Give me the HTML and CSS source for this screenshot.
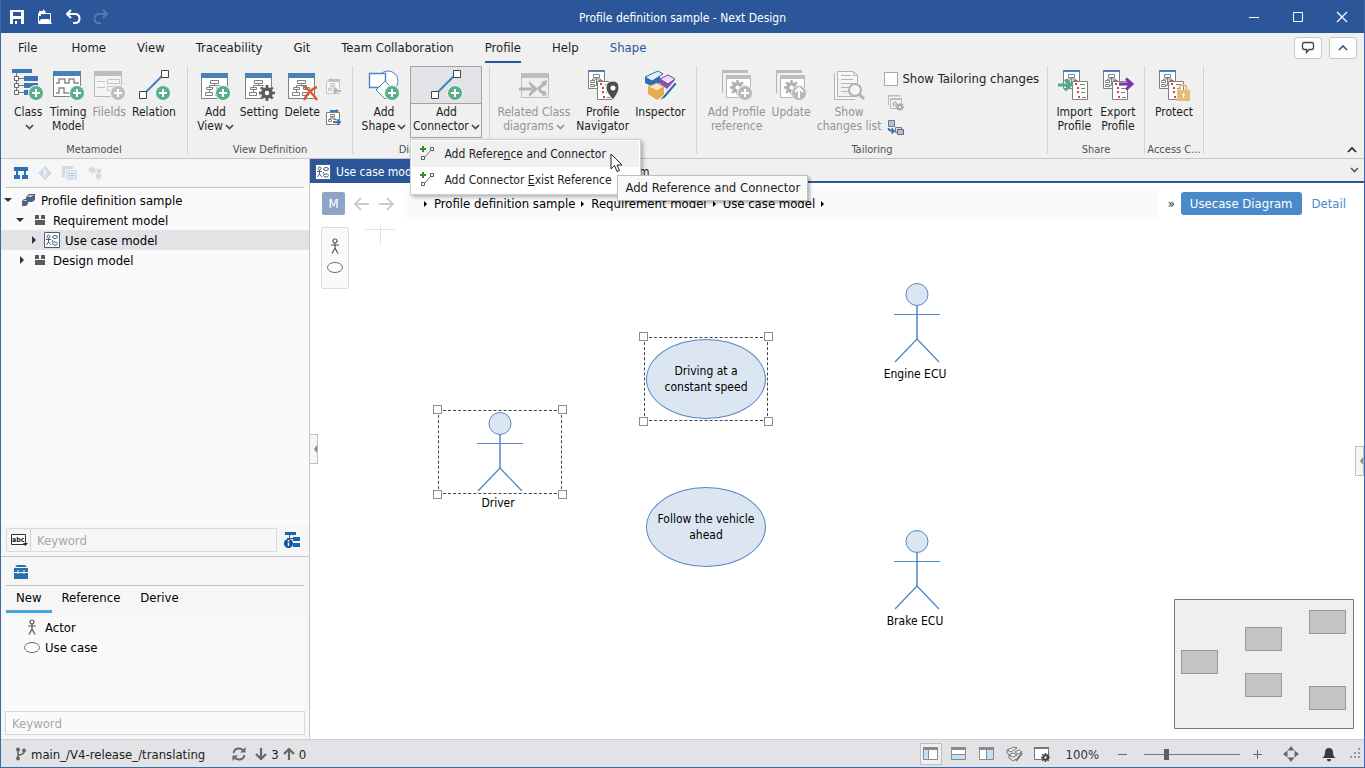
FILE: index.html
```html
<!DOCTYPE html>
<html lang="en">
<head>
    <meta charset="UTF-8">
    <meta name="viewport" content="width=device-width, initial-scale=1.0">
    <title>Profile definition sample - Next Design</title>
    <link rel="stylesheet" href="styles.css">
</head>
<body>
    <!-- shared icon parts -->
    <svg class="defs" width="0" height="0">
        <symbol id="plus" viewBox="0 0 16 16">
            <circle cx="8" cy="8" r="8" fill="#f0f0f0"/>
            <circle cx="8" cy="8" r="7" fill="currentColor"/>
            <path d="M8 4v8M4 8h8" stroke="#fff" stroke-width="2"/>
        </symbol>
        <symbol id="view" viewBox="0 0 28 26">
            <path d="M.5 3v22.500h26V3" fill="#fff" stroke="#808080"/>
            <path d="M0 0h27v5H0z" fill="#4a7fb8"/>
            <path d="M9.500 7.500h8v3h-8zM5.500 14.500h6v2h-6zM4.500 19.500h7v3h-7zM15.500 14.500h6v2h-6zM14.500 19.500h6v3h-6zM13.500 10.500v2M8.500 14.500v-2h10v2M8.500 16.500v3" fill="none" stroke="#808080"/>
        </symbol>
        <symbol id="gear" viewBox="0 0 16 16">
            <path d="M8 0v16M0 8h16M2.300 2.300l11.400 11.400M13.700 2.300L2.300 13.700" stroke="currentColor" stroke-width="2.600"/>
            <circle cx="8" cy="8" r="4" fill="#fff" stroke="currentColor" stroke-width="3.600"/>
        </symbol>
        <symbol id="profile" viewBox="0 0 32 32">
            <path d="M.5 1.500h16v17H.5z" fill="#fff" stroke="#808080"/>
            <path d="M0 0h17v2H0z" fill="#4a7fb8"/>
            <path d="M5.500 4.500h6v3h-6zM2.500 10.500h4v2h-4zM10.500 10.500h4v2h-4zM2.500 14.500h4v2h-4zM8.500 7.500v8h-2M4.500 10.500v-1.500h8v1.500" fill="none" stroke="#808080"/>
            <path d="M9.500 11.500h15v18h-15z" fill="#fff" stroke="#808080"/>
            <path d="M12 13h2v2h-2zM14 17h2v2h-2zM14 21h2v2h-2zM15 26h2v2h-2z" fill="#d0452b"/>
            <path d="M17 14.500h5M18 18.500h4M18 22.500h4M19 27.500h4" stroke="#808080"/>
        </symbol>
        <symbol id="chev" viewBox="0 0 9 6"><path d="M1 1l3.500 3.500L8 1" fill="none" stroke="currentColor" stroke-width="1.600"/></symbol>
        <symbol id="relview" viewBox="0 0 17 17">
            <path d="M1.500 3.500h13v12h-13z" fill="#fff" stroke="#808080"/>
            <path d="M5.500 5.500h4v2h-4zM3.500 10.500h3v2h-3zM8.500 10.500h3v2h-3zM7.500 7.500v1.500M5 10V9h5v1" fill="none" stroke="#808080"/>
            <path d="M5 2h7" stroke="#3a77bb" stroke-width="2"/>
            <path d="M11 0l3 2-3 2z" fill="#3a77bb"/>
            <path d="M8 13h8" stroke="#f0f0f0" stroke-width="4"/>
            <path d="M8 13h7M12.500 10.500L15 13l-2.500 2.500" fill="none" stroke="#3a77bb" stroke-width="1.800"/>
        </symbol>
        <symbol id="relview-prev" viewBox="0 0 17 17">
            <path d="M1.500 3.500h13v12h-13z" fill="#f8f8f8" stroke="#c4c4c4"/>
            <path d="M5.500 5.500h4v2h-4zM3.500 10.500h3v2h-3zM8.500 10.500h3v2h-3zM7.500 7.500v1.500M5 10V9h5v1" fill="none" stroke="#c4c4c4"/>
            <path d="M5 2h10" stroke="#bdbdbd" stroke-width="2"/>
            <path d="M6 0L3 2l3 2z" fill="#bdbdbd"/>
            <path d="M8 13h8" stroke="#f0f0f0" stroke-width="4"/>
            <path d="M16 13H9M11.500 10.500L9 13l2.500 2.500" fill="none" stroke="#b4b4b4" stroke-width="1.800"/>
        </symbol>
        <symbol id="man" viewBox="0 0 10 16">
            <circle cx="5" cy="3" r="2" fill="none" stroke="currentColor" stroke-width="1.200"/>
            <path d="M5 5v5M1 7h8M5 10l-3 5.500M5 10l3 5.500" fill="none" stroke="currentColor" stroke-width="1.200"/>
        </symbol>
        <symbol id="oval" viewBox="0 0 16 11"><ellipse cx="8" cy="5.500" rx="7.500" ry="5" fill="#fff" stroke="#6a6a6a"/></symbol>
        <symbol id="ucmodel" viewBox="0 0 16 16">
            <path d="M.5.5h15v15H.5z" fill="#fff" stroke="#4b5d79"/>
            <circle cx="4.500" cy="4.500" r="1.500" fill="none" stroke="#4b5d79"/>
            <path d="M4.500 6v4M2 7.500h5M4.500 10L2.500 13M4.500 10l2.500 3M9 8l-1 2" fill="none" stroke="#4b5d79"/>
            <ellipse cx="11" cy="5" rx="2.500" ry="1.500" fill="none" stroke="#4b5d79"/>
            <ellipse cx="11" cy="11.500" rx="2.500" ry="1.500" fill="none" stroke="#4b5d79"/>
        </symbol>
        <symbol id="pkg" viewBox="0 0 10 10"><path d="M0 0h4v4H0zM6 0h4v4H6zM0 5h10v5H0z" fill="#5a5a5a"/></symbol>
        <symbol id="addconn" viewBox="0 0 16 16">
            <path d="M3 0v6M0 3h6" stroke="#2f8f2f" stroke-width="2"/>
            <path d="M4 12l7-8" stroke="#777"/>
            <path d="M1.500 10.500h3v3h-3zM10.500 1.500h3v3h-3z" fill="#fff" stroke="#4b5d79"/>
        </symbol>
        <symbol id="actor" viewBox="0 0 46 80">
            <path d="M23 23v34" stroke="#7ba5da" stroke-width="2"/>
            <path d="M0 31.500h46" stroke="#5588c4"/>
            <path d="M1 79l22-23 22 23" fill="none" stroke="#5588c4" stroke-width="1.300"/>
            <circle cx="23" cy="11.500" r="11" fill="#dce6f2" stroke="#5588c4"/>
        </symbol>
        <symbol id="tri-down" viewBox="0 0 8 8"><path d="M0 2h8L4 6z" fill="#333"/></symbol>
        <symbol id="tri-right" viewBox="0 0 8 8"><path d="M4 0v8l4-4z" fill="#333"/></symbol>
        <symbol id="profsheet" viewBox="0 0 32 32">
            <path d="M1.500 23V1.500h25" fill="none" stroke="#b4b4b4"/>
            <path d="M1 0h26v3H1z" fill="#bdbdbd"/>
            <path d="M5.500 6.500h24v21h-24z" fill="#fff" stroke="#b4b4b4"/>
            <path d="M5 5h25v4H5z" fill="#bdbdbd"/>
        </symbol>
    </svg>

    <div class="window">
        <header class="title-bar">
            <div class="quick">
                <button aria-label="Save"><svg width="16" height="16"><path d="M1 1h14v14H1z" fill="#fff"/><path d="M4 3h8v4H4zM4 10h8v5H4z" fill="#2b579a"/><path d="M6 12h2v3H6z" fill="#fff"/></svg></button>
                <button aria-label="Open"><svg width="16" height="16"><path d="M1.500 14V4.500h12V15" fill="none" stroke="#fff"/><path d="M1 14l3-4h8l3 5H2z" fill="#fff"/><path d="M3 7V3h4" fill="none" stroke="#fff" stroke-width="2"/><path d="M6 0l3 3-3 3z" fill="#fff"/></svg></button>
                <button aria-label="Undo"><svg width="16" height="16"><path d="M6 1L2 5l4 4M2 5h8q4.500 0 4.500 4.500T10 14H8" fill="none" stroke="#fff" stroke-width="2"/></svg></button>
                <button aria-label="Redo" disabled><svg width="16" height="16"><path d="M10 1l4 4-4 4M14 5H6Q1.500 5 1.500 9.500T6 14h2" fill="none" stroke="#5379b1" stroke-width="2"/></svg></button>
            </div>
            <h1>Profile definition sample - Next Design</h1>
            <div class="win-buttons">
                <button aria-label="Minimize"><svg width="12" height="12"><path d="M1 6.500h10" stroke="#fff"/></svg></button>
                <button aria-label="Maximize"><svg width="12" height="12"><path d="M1.500 1.500h9v9h-9z" fill="none" stroke="#fff"/></svg></button>
                <button aria-label="Close"><svg width="12" height="12"><path d="M1 1l10 10M11 1L1 11" stroke="#fff" stroke-width="1.200"/></svg></button>
            </div>
        </header>

        <nav class="tabs">
            <a href="#" class="file">File</a>
            <a href="#">Home</a>
            <a href="#">View</a>
            <a href="#">Traceability</a>
            <a href="#">Git</a>
            <a href="#">Team Collaboration</a>
            <a href="#" class="active">Profile</a>
            <a href="#">Help</a>
            <a href="#" class="context">Shape</a>
            <div class="tab-buttons">
                <button aria-label="Feedback"><svg width="14" height="14"><path d="M3.500 1.500h7q2 0 2 2v3q0 2-2 2H8l-2.500 3v-3h-2q-2 0-2-2v-3q0-2 2-2z" fill="none" stroke="#444" stroke-width="1.300"/></svg></button>
                <button aria-label="Collapse"><svg width="12" height="8"><path d="M2 6l4-4 4 4" fill="none" stroke="#2b579a" stroke-width="1.600"/></svg></button>
            </div>
        </nav>

        <section class="ribbon">
            <div class="group metamodel">
                <div class="items">
                    <button class="tool">
                        <svg width="32" height="32"><path d="M0 0h20v4H0zM12 7h14v5H12zM12 14h14v5H12zM12 21h8v5h-8z" fill="#3d76b5"/><path d="M4.500 4v22M4.500 9.500H12M4.500 16.500H12M4.500 23.500H12" stroke="#777"/><path d="M2.500 7.500h4v4h-4zM2.500 14.500h4v4h-4zM2.500 21.500h4v4h-4z" fill="#fff" stroke="#666"/><use href="#plus" x="16" y="16" width="16" height="16" color="#57b088"/></svg>
                        <span>Class<br><svg class="chev" width="9" height="6"><use href="#chev"/></svg></span>
                    </button>
                    <button class="tool">
                        <svg width="32" height="32"><path d="M1.500 4v23.500h27V4" fill="#fff" stroke="#808080"/><path d="M1 2h28v5H1z" fill="#4a7fb8"/><path d="M4 14h3v-4h6v4h4v-4h5v4h5M4 24h3v-5h5v5h6" fill="none" stroke="#8a8a8a" stroke-width="1.500"/><use href="#plus" x="17" y="16" width="16" height="16" color="#57b088"/></svg>
                        <span>Timing<br>Model</span>
                    </button>
                    <button class="tool" disabled>
                        <svg width="32" height="32"><path d="M1.500 4v23.500h27V4" fill="#f4f4f4" stroke="#b8b8b8"/><path d="M1 2h28v5H1z" fill="#bdbdbd"/><path d="M4 12.500h8M4 18.500h8M14.500 10.500h12v4h-12zM14.500 17.500h12v4h-12z" fill="none" stroke="#c4c4c4"/><use href="#plus" x="17" y="16" width="16" height="16" color="#bfbfbf"/></svg>
                        <span>Filelds</span>
                    </button>
                    <button class="tool">
                        <svg width="32" height="32"><path d="M8 23L24 7" stroke="#3f7fc3" stroke-width="2"/><path d="M1.500 22.500h7v7h-7zM23.500 1.500h7v7h-7z" fill="#fff" stroke="#444"/><use href="#plus" x="17" y="16" width="16" height="16" color="#57b088"/></svg>
                        <span>Relation</span>
                    </button>
                </div>
                <div class="caption">Metamodel</div>
            </div>

            <div class="group viewdef">
                <div class="items">
                    <button class="tool">
                        <svg width="32" height="32"><use href="#view" x="2" y="4" width="28" height="26"/><use href="#plus" x="16" y="16" width="16" height="16" color="#57b088"/></svg>
                        <span>Add<br>View<svg class="chev" width="9" height="6"><use href="#chev"/></svg></span>
                    </button>
                    <button class="tool">
                        <svg width="32" height="32"><use href="#view" x="2" y="4" width="28" height="26"/><circle cx="24" cy="24" r="8" fill="#f0f0f0"/><use href="#gear" x="16" y="16" width="16" height="16" color="#5c5c5c"/></svg>
                        <span>Setting</span>
                    </button>
                    <button class="tool">
                        <svg width="32" height="32"><use href="#view" x="2" y="4" width="28" height="26"/><path d="M17 17q7 4 14 14M31 18q-8 3-13 13" fill="none" stroke="#d95b35" stroke-width="2.500"/></svg>
                        <span>Delete</span>
                    </button>
                    <div class="small-tools">
                        <button aria-label="Previous view" disabled><svg width="17" height="17"><use href="#relview-prev"/></svg></button>
                        <button aria-label="Next view"><svg width="17" height="17"><use href="#relview"/></svg></button>
                    </div>
                </div>
                <div class="caption">View Definition</div>
            </div>

            <div class="group diagram">
                <div class="items">
                    <button class="tool">
                        <svg width="32" height="32"><circle cx="20" cy="12" r="10" fill="#fff" stroke="#4a86c5"/><path d="M1.500 4.500h16v14h-16z" fill="#fff" stroke="#4a86c5" stroke-width="1.400"/><path d="M17 12l9 9-9 9-9-9z" fill="#fff" stroke="#4a86c5"/><use href="#plus" x="16" y="16" width="16" height="16" color="#57b088"/></svg>
                        <span>Add<br>Shape<svg class="chev" width="9" height="6"><use href="#chev"/></svg></span>
                    </button>
                    <div class="dropdown">
                        <button class="tool split">
                            <svg width="32" height="32"><path d="M8 23L24 7" stroke="#3f7fc3" stroke-width="2"/><path d="M1.500 22.500h7v7h-7zM23.500 1.500h7v7h-7z" fill="#fff" stroke="#444"/><use href="#plus" x="17" y="16" width="16" height="16" color="#57b088"/></svg>
                            <span>Add<br>Connector<svg class="chev" width="9" height="6"><use href="#chev"/></svg></span>
                        </button>
                        <div class="menu">
                            <button class="hover"><svg width="16" height="16"><use href="#addconn"/></svg><span>Add Refere<u>n</u>ce and Connector</span></button>
                            <button><svg width="16" height="16"><use href="#addconn"/></svg><span>Add Connector <u>E</u>xist Reference</span></button>
                        </div>
                        <div class="tooltip">Add Reference and Connector</div>
                        <svg class="cursor" width="13" height="20"><path d="M1 1v15l3.500-3.500 2.500 6 2.500-1-2.500-5.500h5z" fill="#fff" stroke="#222"/></svg>
                    </div>
                </div>
                <div class="caption">Diagram</div>
            </div>

            <div class="group navigator">
                <div class="items">
                    <button class="tool" disabled>
                        <svg width="32" height="32"><path d="M3.500 6v22.500h27V6" fill="#efefef" stroke="#c0c0c0"/><path d="M3 4h28v5H3z" fill="#bdbdbd"/><path d="M1 20h13M20 20l7-6M21 21l6 4" fill="none" stroke="#b3b3b3" stroke-width="3"/><path d="M11 12l9 8-9 8v-3l4-5-4-5zM23 13l6-2-1 6zM24 27l5-1-2-5z" fill="#b3b3b3"/></svg>
                        <span>Related Class<br>diagrams<svg class="chev" width="9" height="6"><use href="#chev"/></svg></span>
                    </button>
                    <button class="tool">
                        <svg width="32" height="32"><use href="#profile" x="1" y="1" width="32" height="32"/><path d="M26 31q-7-8-7-12 0-7 7-7 6 0 6 7 0 4-6 12z" fill="#4d4d4d" stroke="#f0f0f0"/><circle cx="26" cy="19" r="2.500" fill="#fff"/></svg>
                        <span>Profile<br>Navigator</span>
                    </button>
                    <button class="tool">
                        <svg width="32" height="32"><path d="M1 8v6l8 4 7-4V7z" fill="#2d6fb5"/><path d="M1 8l13-6 5 3-11 7z" fill="#e6f0fa" stroke="#2d6fb5"/><path d="M16 10v5l7 5 8-9-1-1z" fill="#8b50b4"/><path d="M16 10l8-4 7 4-7 5z" fill="#ecdff5" stroke="#7b3fa5"/><path d="M4 18v7l9 6 7-5v-8z" fill="#e9a951"/><path d="M4 18l9-4 7 4-7 4z" fill="#fae6c5" stroke="#e3a04a"/><path d="M31 13L19 27l-4 5 6-3 12-14z" fill="#2468b0" stroke="#f0f0f0"/></svg>
                        <span>Inspector</span>
                    </button>
                </div>
                <div class="caption"></div>
            </div>

            <div class="group tailoring">
                <div class="items">
                    <button class="tool" disabled>
                        <svg width="32" height="32"><use href="#profsheet" y="1" width="32" height="32"/><use href="#gear" x="9" y="11" width="15" height="15" color="#b0b0b0"/><use href="#plus" x="16" y="16" width="16" height="16" color="#b8b8b8"/></svg>
                        <span>Add Profile<br>reference</span>
                    </button>
                    <button class="tool" disabled>
                        <svg width="32" height="32"><use href="#profsheet" y="1" width="32" height="32"/><use href="#gear" x="9" y="11" width="15" height="15" color="#b0b0b0"/><circle cx="24" cy="24" r="7.500" fill="#b8b8b8" stroke="#f0f0f0"/><path d="M24 29v-9M20 23l4-4 4 4" fill="none" stroke="#fff" stroke-width="2"/></svg>
                        <span>Update</span>
                    </button>
                    <button class="tool" disabled>
                        <svg width="32" height="32"><path d="M1.500 4v26.500H22M4.500 2.500h16l4 4v21h-20z" fill="#f6f6f6" stroke="#b4b4b4"/><path d="M20.500 2.500v4h4M8 6.500h10M8 10.500h12M8 14.500h12M8 18.500h9M8 22.500h8" fill="none" stroke="#b4b4b4"/><circle cx="22" cy="21" r="6" fill="#f4f4f4" stroke="#b0b0b0" stroke-width="2"/><path d="M26 25l5 5" stroke="#b0b0b0" stroke-width="3"/></svg>
                        <span>Show<br>changes list</span>
                    </button>
                    <div class="tailor-side">
                        <label class="check"><input type="checkbox">Show Tailoring changes</label>
                        <button aria-label="Tailoring settings" disabled><svg width="17" height="17"><path d="M1.500 11V2h12M3.500 4.500h11v10h-11z" fill="#f6f6f6" stroke="#b8b8b8"/><path d="M1 1h12v1H1zM3 4h12v2H3z" fill="#bdbdbd"/><use href="#gear" x="5" y="7" width="6" height="6" color="#bbb"/><use href="#gear" x="9" y="9" width="8" height="8" color="#a5a5a5"/></svg></button>
                        <button aria-label="Replace"><svg width="17" height="17"><path d="M1.500 1.500h6v6h-6z" fill="#a9c4e2" stroke="#777"/><path d="M8.500 8.500h6v5h-6z" fill="#ddd" stroke="#777"/><path d="M10.500 10.500h6v5h-6z" fill="#a9c4e2" stroke="#666"/><path d="M1.500 9q0 3 5 3M4.500 9.500L7 12l-2.500 2.500" fill="none" stroke="#2a6ab0" stroke-width="1.700"/></svg></button>
                    </div>
                </div>
                <div class="caption">Tailoring</div>
            </div>

            <div class="group share">
                <div class="items">
                    <button class="tool">
                        <svg width="32" height="32"><use href="#profile" x="5" y="1" width="32" height="32"/><path d="M0 16h12M7 10.500l6 5.500-6 5.500" fill="none" stroke="#4bb086" stroke-width="3"/></svg>
                        <span>Import<br>Profile</span>
                    </button>
                    <button class="tool">
                        <svg width="32" height="32"><use href="#profile" x="1" y="1" width="32" height="32"/><path d="M17 15h13M24 9.500l6 5.500-6 5.500" fill="none" stroke="#8030a8" stroke-width="3"/></svg>
                        <span>Export<br>Profile</span>
                    </button>
                </div>
                <div class="caption">Share</div>
            </div>

            <div class="group access">
                <div class="items">
                    <button class="tool">
                        <svg width="32" height="32"><use href="#profile" x="1" y="1" width="32" height="32"/><path d="M21.500 22v-3q0-3 3.500-3t3.500 3v3" fill="none" stroke="#e9bb78" stroke-width="2"/><path d="M19 21h13v11H19z" fill="#e9bb78"/><path d="M25.500 29v-5M24 25.500h3" stroke="#fff"/></svg>
                        <span>Protect</span>
                    </button>
                </div>
                <div class="caption">Access C...</div>
            </div>
            <button class="pin" aria-label="Fold ribbon"><svg width="12" height="8"><path d="M2 6l4-4 4 4" fill="none" stroke="#222" stroke-width="1.600"/></svg></button>
        </section>

        <div class="body">
            <aside class="side">
                <div class="side-tools">
                    <button aria-label="Model"><svg width="16" height="16"><path d="M1 2h14v4H1zM1 10h6v4H1zM9 10h6v4H9z" fill="#2b72b5"/><path d="M4 6v4M12 6v4" stroke="#2b72b5" stroke-width="2"/></svg></button>
                    <button aria-label="Git" disabled><svg width="16" height="16"><path d="M8 1l7 7-7 7-7-7z" fill="#cfdce8"/><path d="M6 4l4 4M7.500 6v6" stroke="#f6f6f6" stroke-width="1.300"/></svg></button>
                    <button aria-label="Pages" disabled><svg width="18" height="16"><path d="M1 1h11v3H4v8H1z" fill="#cfdce8"/><path d="M5.500 5.500h10v9h-10z" fill="#e4edf5" stroke="#cfdce8"/><path d="M7 8.500h7M7 10.500h7M7 12.500h5" stroke="#b9cde0"/></svg></button>
                    <button aria-label="Links" disabled><svg width="16" height="16"><path d="M1 5l4-4 4 4-4 4zM10 4h4v4h-4zM9 10l3-2 3 3-3 4-3-2z" fill="#cfdce8"/><path d="M6 5h5M7 6l4 5" stroke="#cfdce8"/></svg></button>
                </div>
                <ul class="tree">
                    <li class="lv0"><svg width="8" height="8"><use href="#tri-down"/></svg><svg class="ic" width="16" height="14"><path d="M6 4l3-3h6v6l-3 2H6z" fill="#4b6283"/><path d="M7 4l3-2h4l-3 2z" fill="#c3cede"/><path d="M2 8l2-2h4v5l-2 2H2z" fill="#4b6283"/><path d="M3 8l1-1h3L6 8z" fill="#c3cede"/></svg>Profile definition sample</li>
                    <li class="lv1"><svg width="8" height="8"><use href="#tri-down"/></svg><svg class="ic" width="16" height="10"><use href="#pkg" x="3" width="10" height="10"/></svg>Requirement model</li>
                    <li class="lv2 selected"><svg width="8" height="8"><use href="#tri-right"/></svg><svg class="ic" width="16" height="16"><use href="#ucmodel"/></svg>Use case model</li>
                    <li class="lv1"><svg width="8" height="8"><use href="#tri-right"/></svg><svg class="ic" width="16" height="10"><use href="#pkg" x="3" width="10" height="10"/></svg>Design model</li>
                </ul>
                <div class="search">
                    <div class="search-box">
                        <button aria-label="Match mode"><svg width="18" height="14"><path d="M.5 1.500h14v10H.5z" fill="#fff" stroke="#333"/><text x="1" y="9" font-size="7" font-weight="bold" fill="#222">abc</text><path d="M12 10h5l-2.500 3z" fill="#333"/></svg></button>
                        <input type="text" placeholder="Keyword" aria-label="Model keyword">
                    </div>
                    <button aria-label="Model info"><svg width="16" height="16"><path d="M1 0h11v3H1zM9 5h7v4H9zM9 11h7v4H9z" fill="#1565b8"/><path d="M5.500 3v3M3 6.500h6" stroke="#555"/><circle cx="4.500" cy="11.500" r="4.500" fill="#1050a5"/><path d="M4.500 8v1.500M4.500 10.500V14" stroke="#fff" stroke-width="1.500"/></svg></button>
                </div>
                <div class="toolbox-head">
                    <svg width="16" height="14"><path d="M4 0h8l2 2H2zM1 3h14v4H1zM1 8h14v6H1z" fill="#2a70ad"/><path d="M5 5v4M11 5v4" stroke="#fff"/></svg>
                </div>
                <div class="side-tabs">
                    <button class="active">New</button>
                    <button>Reference</button>
                    <button>Derive</button>
                </div>
                <ul class="toolbox">
                    <li><svg width="16" height="16"><use href="#man" x="3" width="10" height="16"/></svg>Actor</li>
                    <li><svg width="16" height="11"><use href="#oval"/></svg>Use case</li>
                </ul>
                <input class="tool-keyword" type="text" placeholder="Keyword" aria-label="Toolbox keyword">
            </aside>

            <main class="main">
                <div class="doc-tabs">
                    <button class="doc active"><svg width="16" height="16"><use href="#ucmodel"/></svg>Use case model</button>
                    <button class="doc other">Diagram</button>
                    <button class="list" aria-label="Tab list"><svg width="9" height="6"><use href="#chev"/></svg></button>
                </div>
                <div class="crumb-bar">
                    <span class="badge">M</span>
                    <button aria-label="Back"><svg width="17" height="14"><path d="M16 7H2M8 1L2 7l6 6" fill="none" stroke="#ccc" stroke-width="1.800"/></svg></button>
                    <button aria-label="Forward"><svg width="17" height="14"><path d="M1 7h14M9 1l6 6-6 6" fill="none" stroke="#ccc" stroke-width="1.800"/></svg></button>
                    <div class="crumbs">
                        <svg width="4" height="6"><path d="M0 0l3 3-3 3z"/></svg>
                        <a href="#">Profile definition sample</a>
                        <svg width="4" height="6"><path d="M0 0l3 3-3 3z"/></svg>
                        <a href="#">Requirement model</a>
                        <svg width="4" height="6"><path d="M0 0l3 3-3 3z"/></svg>
                        <a href="#">Use case model</a>
                        <svg width="4" height="6"><path d="M0 0l3 3-3 3z"/></svg>
                    </div>
                    <span class="more">»</span>
                    <button class="view-btn">Usecase Diagram</button>
                    <a href="#" class="detail">Detail</a>
                </div>
                <div class="canvas">
                    <div class="palette">
                        <svg width="10" height="16"><use href="#man"/></svg>
                        <svg width="16" height="11"><use href="#oval"/></svg>
                    </div>
                    <svg class="origin" width="30" height="20"><path d="M0 5.500h30M15.500 1v19" stroke="#e2e2e2"/></svg>

                    <div class="node driver">
                        <svg width="46" height="80"><use href="#actor"/></svg>
                        <span>Driver</span>
                        <div class="selection"><i></i><i></i><i></i><i></i></div>
                    </div>
                    <div class="node engine">
                        <svg width="46" height="80"><use href="#actor"/></svg>
                        <span>Engine ECU</span>
                    </div>
                    <div class="node brake">
                        <svg width="46" height="80"><use href="#actor"/></svg>
                        <span>Brake ECU</span>
                    </div>
                    <div class="node driving">
                        <div class="ellipse">Driving at a<br>constant speed</div>
                        <div class="selection"><i></i><i></i><i></i><i></i></div>
                    </div>
                    <div class="node follow">
                        <div class="ellipse">Follow the vehicle<br>ahead</div>
                    </div>

                    <button class="handle left" aria-label="Toggle side panel"></button>
                    <button class="handle right" aria-label="Toggle inspector"></button>
                    <svg class="minimap" viewBox="0 0 180 130" width="180" height="130">
                        <path d="M.5.5h179v129H.5z" fill="#efefef" stroke="#777"/>
                        <g fill="#c4c4c4" stroke="#999">
                            <rect x="7.500" y="51.500" width="36" height="23"/>
                            <rect x="71.500" y="28.500" width="36" height="23"/>
                            <rect x="71.500" y="74.500" width="36" height="23"/>
                            <rect x="135.500" y="11.500" width="36" height="23"/>
                            <rect x="135.500" y="87.500" width="36" height="23"/>
                        </g>
                    </svg>
                </div>
            </main>
        </div>

        <footer class="status">
            <div class="git">
                <svg width="12" height="14"><path d="M3 2v9M3 8q6 0 6-4" fill="none" stroke="#666" stroke-width="1.600"/><circle cx="3" cy="2.500" r="2" fill="#666"/><circle cx="3" cy="11.500" r="2" fill="#666"/><circle cx="9" cy="3.500" r="2" fill="#666"/></svg>
                <span class="branch">main_/V4-release_/translating</span>
                <svg class="sync" width="14" height="14"><path d="M1.500 6q1-4.500 5.500-4.500 3 0 5 2.500M12.500 8q-1 4.500-5.500 4.500-3 0-5-2.500" fill="none" stroke="#666" stroke-width="1.800"/><path d="M13.500 0v5.500H8zM.5 14V8.500H6z" fill="#666"/></svg>
                <svg width="12" height="12"><path d="M6 0v10M1 6l5 5 5-5" fill="none" stroke="#666" stroke-width="2.200"/></svg>
                <span>3</span>
                <svg width="12" height="12"><path d="M6 12V2M1 6l5-5 5 5" fill="none" stroke="#666" stroke-width="2.200"/></svg>
                <span>0</span>
            </div>
            <div class="layouts">
                <button class="on" aria-label="Left pane"><svg width="16" height="14"><path d="M.5.5h14v12H.5z" fill="#fff" stroke="#8a8a8a"/><path d="M0 0h15v3H0z" fill="#8a8a8a"/><path d="M1 3h4v9H1z" fill="#c6dff8"/><path d="M5.500 3v9" stroke="#8a8a8a"/></svg></button>
                <button aria-label="Bottom pane"><svg width="16" height="14"><path d="M.5.5h14v12H.5z" fill="#fff" stroke="#8a8a8a"/><path d="M0 0h15v3H0z" fill="#8a8a8a"/><path d="M1 8h13v4H1z" fill="#c6dff8"/><path d="M1 7.500h13" stroke="#8a8a8a"/></svg></button>
                <button aria-label="Right pane"><svg width="16" height="14"><path d="M.5.5h14v12H.5z" fill="#fff" stroke="#8a8a8a"/><path d="M0 0h15v3H0z" fill="#8a8a8a"/><path d="M8 3h6v9H8z" fill="#c6dff8"/><path d="M7.500 3v9" stroke="#8a8a8a"/></svg></button>
                <button aria-label="Inspector pane"><svg width="16" height="16"><path d="M0 4l7-3 3 1-6 4zM8 6l4-2 3 2-4 2zM2 9l4-2 4 2-4 2z" fill="#f4f4f4" stroke="#777"/><path d="M0 4v3l3 2M2 9v3l4 3 3-2" fill="none" stroke="#777"/><path d="M15 7l-6 8" stroke="#777" stroke-width="2"/></svg></button>
                <button aria-label="Pane settings"><svg width="18" height="15"><path d="M.5.5h14v12H.5z" fill="#fff" stroke="#777"/><path d="M0 0h15v2H0z" fill="#777"/><use href="#gear" x="7" y="6" width="9" height="9" color="#444"/></svg></button>
            </div>
            <span class="percent">100%</span>
            <button aria-label="Zoom out"><svg width="11" height="11"><path d="M1 5.500h9" stroke="#666"/></svg></button>
            <input class="zoom" type="range" min="0" max="100" value="22" aria-label="Zoom">
            <button aria-label="Zoom in"><svg width="11" height="11"><path d="M1 5.500h9M5.500 1v9" stroke="#666"/></svg></button>
            <button class="fit" aria-label="Fit"><svg width="16" height="16"><path d="M8 0l3.500 4.500h-7zM8 16l3.500-4.500h-7zM0 8l4.500-3.500v7zM16 8l-4.500-3.500v7z" fill="#666"/><path d="M6.500 6.500h3v3h-3z" fill="#e1e3e6"/></svg></button>
            <button class="bell" aria-label="Notifications"><svg width="14" height="15"><path d="M7 1q4 0 4 5 0 3 2.500 5H.5Q3 9 3 6q0-5 4-5zM5 12h4q0 2.500-2 2.500T5 12z" fill="#3a3a3a"/></svg></button>
            <svg class="grip" width="12" height="12"><path d="M8 0h2v2H8zM8 4h2v2H8zM4 4h2v2H4zM8 8h2v2H8zM4 8h2v2H4zM0 8h2v2H0z" fill="#999"/></svg>
        </footer>
    </div>
</body>
</html>
```
FILE: styles.css
```css
* {
    box-sizing: border-box;
}
body {
    margin: 0;
    font-family: "DejaVu Sans Condensed", "DejaVu Sans", sans-serif;
    font-size: 13px;
    color: #1e1e1e;
}
button, input {
    font: inherit;
    color: inherit;
}
button {
    background: none;
    border: none;
    padding: 0;
    cursor: pointer;
}
svg {
    display: block;
    flex: none;
    overflow: visible;
}
a {
    color: inherit;
    text-decoration: none;
}
ul {
    list-style: none;
    margin: 0;
    padding: 0;
}
.defs {
    position: absolute;
}
.window {
    display: flex;
    flex-direction: column;
    height: 100vh;
    border: 1px solid #3c68aa;
    border-top: none;
    background-color: #f0f0f0;
}

/* title bar */
.title-bar {
    display: grid;
    grid-template-columns: 1fr auto 1fr;
    align-items: center;
    height: 33px;
    flex: none;
    background-color: #2b579a;
    color: white;
}
.title-bar h1 {
    margin: 0;
    padding-top: 2px;
    font-size: 12px;
    font-weight: normal;
}
.quick {
    display: flex;
    gap: 12px;
    padding-left: 8px;
}
.win-buttons {
    display: flex;
    justify-content: flex-end;
    gap: 32px;
    padding-right: 16px;
}

/* ribbon tabs */
.tabs {
    display: flex;
    gap: 31px;
    height: 30px;
    flex: none;
    padding: 0 7px 0 17px;
}
.tabs a {
    height: 30px;
    line-height: 30px;
    border-bottom: 2px solid transparent;
}
.tabs .file {
    margin-right: 3px;
}
.tabs a.active {
    border-bottom-color: #2b579a;
}
.tabs a.context {
    color: #2b579a;
}
.tab-buttons {
    display: flex;
    gap: 7px;
    margin-left: auto;
    padding-top: 4px;
}
.tab-buttons button {
    display: grid;
    place-items: center;
    width: 28px;
    height: 22px;
    background-color: #fdfdfd;
    border: 1px solid #c6c6c6;
    border-radius: 3px;
}

/* ribbon */
.ribbon {
    display: flex;
    height: 96px;
    flex: none;
    padding: 3px 0 4px;
    border-bottom: 1px solid #c6c6c6;
}
.group {
    display: flex;
    flex-direction: column;
    border-right: 1px solid #d4d4d4;
}
.metamodel {
    width: 187px;
}
.viewdef {
    width: 165px;
}
.diagram {
    width: 137px;
}
.navigator {
    width: 207px;
}
.tailoring {
    width: 351px;
}
.share {
    width: 97px;
}
.access {
    width: 59px;
}
.items {
    display: flex;
    justify-content: center;
    height: 72px;
}
.caption {
    margin-top: 5px;
    text-align: center;
    font-size: 11px;
    line-height: 14px;
    color: #505050;
    white-space: nowrap;
}
.diagram .caption {
    padding-right: 2px;
}
.tool {
    display: flex;
    flex-direction: column;
    align-items: center;
    min-width: 38px;
    height: 72px;
    padding: 3px 4px 0;
    font-size: 12px;
    line-height: 14px;
    white-space: nowrap;
}
.metamodel .tool, .viewdef .tool, .navigator .tool, .tailoring .tool {
    padding: 3px 3px 0;
}
.tool span {
    margin-top: 4px;
}
.tool:disabled {
    color: #949494;
}
.chev {
    display: inline-block;
    margin-left: 2px;
    color: #444;
}
.tool:disabled .chev {
    color: #949494;
}
.navigator .items {
    padding-right: 3px;
}
.small-tools {
    display: flex;
    flex-direction: column;
    gap: 14px;
    padding: 12px 4px 0 2px;
}
.dropdown {
    position: relative;
}
.diagram .items {
    padding-right: 2px;
}
.tool.split {
    width: 72px;
    padding: 2px 0 0;
    border: 1px solid #a0a3a8;
    background: linear-gradient(#e1e3e6 36px, #a0a3a8 36px, #a0a3a8 37px, #f0f0f0 37px);
}
.menu {
    position: absolute;
    z-index: 2;
    top: 73px;
    left: 0;
    width: 231px;
    padding: 1px;
    background-color: white;
    border: 1px solid #d0d0d0;
    box-shadow: 2px 2px 4px rgba(0, 0, 0, 0.3);
}
.menu button {
    display: flex;
    align-items: center;
    gap: 8px;
    width: 100%;
    height: 26px;
    padding-left: 8px;
    font-size: 12px;
    white-space: nowrap;
}
.menu .hover {
    background-color: #f0f0f0;
}
.tooltip {
    position: absolute;
    z-index: 3;
    top: 109px;
    left: 207px;
    padding: 0 7px;
    line-height: 24px;
    background-color: #f9f9f9;
    border: 1px solid #bebebe;
    box-shadow: 2px 2px 3px rgba(0, 0, 0, 0.3);
    white-space: nowrap;
}
.cursor {
    position: absolute;
    z-index: 4;
    top: 87px;
    left: 200px;
}
.tailor-side {
    display: flex;
    flex-direction: column;
    align-items: flex-start;
    gap: 8px;
    padding-top: 5px;
}
.tailor-side button {
    margin-left: 3px;
}
.check {
    display: flex;
    align-items: center;
    gap: 4px;
    white-space: nowrap;
}
.check input {
    appearance: none;
    width: 14px;
    height: 14px;
    margin: 0;
    background-color: white;
    border: 1px solid #a8a8a8;
}
.pin {
    align-self: flex-end;
    margin-left: auto;
    padding: 0 6px 0 0;
}

/* body */
.body {
    display: flex;
    flex: 1;
    min-height: 0;
}
.side {
    display: flex;
    flex-direction: column;
    width: 309px;
    flex: none;
    background-color: #f6f6f6;
    border-right: 1px solid #c6c6c6;
}
.side-tools {
    display: flex;
    align-items: center;
    gap: 8px;
    height: 29px;
    margin: 0 5px;
    padding-left: 7px;
    border-bottom: 1px solid #c0c0c0;
}
.tree {
    flex: 1;
    padding-top: 2px;
    background-color: #fafafa;
}
.tree li {
    display: flex;
    align-items: center;
    height: 20px;
    color: black;
}
.tree .ic {
    margin: 0 5px 0 8px;
}
.tree .lv0 {
    padding-left: 3px;
}
.tree .lv1 {
    padding-left: 15px;
}
.tree .lv2 {
    padding-left: 27px;
}
.tree .selected {
    background-color: #e1e3e7;
}
.search {
    display: flex;
    align-items: center;
    gap: 7px;
    padding: 4px 9px 4px 5px;
    border-bottom: 1px solid #c6c6c6;
}
.search-box {
    display: flex;
    align-items: center;
    flex: 1;
    height: 24px;
    border: 1px solid #dadada;
}
.search-box button {
    height: 22px;
    padding: 0 1px 0 4px;
    border-right: 1px solid #cfcfcf;
}
input::placeholder {
    color: #a8a8a8;
}
.search-box input {
    flex: 1;
    min-width: 0;
    border: none;
    padding: 0 6px;
    background: none;
}
.toolbox-head {
    height: 29px;
    margin: 0 5px;
    padding: 8px 7px;
    border-bottom: 1px solid #c0c0c0;
}
.side-tabs {
    display: flex;
    margin: 0 5px;
    padding-bottom: 4px;
}
.side-tabs button {
    height: 27px;
    padding: 0 10px 2px;
    border-bottom: 3px solid transparent;
    color: black;
}
.side-tabs .active {
    border-bottom-color: #4aa3dc;
}
.toolbox {
    height: 94px;
    margin: 0 4px;
    padding: 0 0 0 19px;
    background-color: #fafafa;
}
.toolbox li {
    display: flex;
    align-items: center;
    gap: 5px;
    height: 20px;
    color: black;
}
.toolbox svg, .palette svg {
    color: #555;
}
.tool-keyword {
    height: 24px;
    margin: 0 4px 4px;
    padding: 0 6px;
    background-color: #fafafa;
    border: 1px solid #d6d6d6;
}

/* document area */
.main {
    display: flex;
    flex-direction: column;
    flex: 1;
    min-width: 0;
    background-color: white;
}
.doc-tabs {
    display: flex;
    height: 24px;
    flex: none;
    background-color: #f0f0f0;
    border-bottom: 2px solid #2b579a;
}
.doc {
    display: flex;
    align-items: center;
    gap: 5px;
    padding: 3px 5px 0;
    font-size: 12px;
}
.doc.active {
    background-color: #2b579a;
    color: white;
}
.doc.other {
    justify-content: flex-end;
    width: 228px;
}
.doc-tabs .list {
    margin-left: auto;
    padding-right: 5px;
    color: #555;
}
.crumb-bar {
    display: flex;
    align-items: center;
    height: 41px;
    flex: none;
    padding: 0 18px 0 12px;
}
.crumb-bar .badge {
    width: 23px;
    margin-right: 8px;
    line-height: 23px;
    text-align: center;
    color: white;
    background-color: #8fa5c6;
    border-radius: 2px;
}
.crumb-bar > button {
    margin-right: 8px;
}
.crumbs {
    display: flex;
    align-items: center;
    gap: 6px;
    flex: 1;
    height: 30px;
    margin-left: 1px;
    padding-left: 20px;
    background-color: #fafafa;
    border-radius: 4px;
    color: black;
}
.more {
    padding: 0 6px 0 9px;
}
.crumb-bar .view-btn {
    height: 23px;
    margin-right: 10px;
    padding: 0 9px;
    color: white;
    background-color: #4a8ac9;
    border-radius: 3px;
}
.detail {
    color: #4a8ac9;
}
.canvas {
    position: relative;
    flex: 1;
    overflow: hidden;
    font-size: 12px;
    color: black;
}
.palette {
    position: absolute;
    top: 3px;
    left: 11px;
    display: flex;
    flex-direction: column;
    align-items: center;
    gap: 8px;
    width: 28px;
    height: 62px;
    padding-top: 10px;
    background-color: #fafafa;
    border: 1px solid #dcdcdc;
    border-radius: 2px;
}
.origin {
    position: absolute;
    top: 0;
    left: 55px;
}

/* diagram nodes */
.node {
    position: absolute;
    display: flex;
    flex-direction: column;
    align-items: center;
    width: 124px;
    line-height: 16px;
    text-align: center;
}
.node > span {
    margin-top: 3px;
    padding-right: 4px;
}
.driver {
    left: 128px;
    top: 188px;
}
.engine {
    left: 545px;
    top: 59px;
}
.brake {
    left: 545px;
    top: 306px;
}
.driving {
    left: 334px;
    top: 115px;
}
.follow {
    left: 334px;
    top: 263px;
}
.ellipse {
    display: flex;
    flex-direction: column;
    justify-content: center;
    width: 120px;
    height: 80px;
    background-color: #dce6f2;
    border: 1px solid #5588c4;
    border-radius: 50%;
    white-space: nowrap;
}
.selection {
    position: absolute;
    top: -2px;
    left: 0;
    width: 124px;
    height: 84px;
    border: 1px dashed #444;
}
.selection i {
    position: absolute;
    width: 9px;
    height: 9px;
    background-color: white;
    border: 1px solid #8c8c8c;
}
.selection i:nth-child(odd) {
    left: -6px;
}
.selection i:nth-child(even) {
    right: -6px;
}
.selection i:nth-child(-n+2) {
    top: -6px;
}
.selection i:nth-child(n+3) {
    bottom: -6px;
}
.handle {
    position: absolute;
    width: 9px;
    height: 30px;
    background-color: #f6f6f6;
    border: 1px solid #c0c0c0;
}
.handle::after {
    content: "";
    display: block;
    border: 4px solid transparent;
    border-right: 3px solid #888;
    border-left: none;
    margin-left: 2px;
}
.handle.left {
    top: 210px;
    left: -1px;
}
.handle.right {
    top: 222px;
    right: 0;
}
.minimap {
    position: absolute;
    right: 10px;
    bottom: 10px;
}

/* status bar */
.status {
    display: flex;
    align-items: center;
    height: 28px;
    flex: none;
    padding: 1px 2px 0 0;
    background-color: #e1e3e6;
    border-top: 1px solid #d0d0d0;
}
.git {
    display: flex;
    align-items: center;
    gap: 4px;
    margin-right: auto;
    padding-left: 14px;
}
.sync {
    margin: 0 5px 0 23px;
}
.layouts {
    display: flex;
    align-items: center;
    gap: 6px;
}
.layouts button {
    display: grid;
    place-items: center;
    width: 22px;
    height: 22px;
    border: 1px solid transparent;
}
.layouts .on {
    background-color: #f0f0f0;
    border-color: #c0c0c0;
}
.percent {
    margin: 0 18px 0 12px;
    color: #333;
}
.zoom {
    appearance: none;
    width: 96px;
    height: 11px;
    margin: 0 12px 0 16px;
    background: linear-gradient(#777, #777) center / 100% 1px no-repeat;
}
.zoom::-webkit-slider-thumb {
    appearance: none;
    width: 5px;
    height: 11px;
    background-color: #5f5f5f;
}
.fit {
    margin: 0 23px 0 20px;
}
.bell {
    margin-right: 14px;
}
```
